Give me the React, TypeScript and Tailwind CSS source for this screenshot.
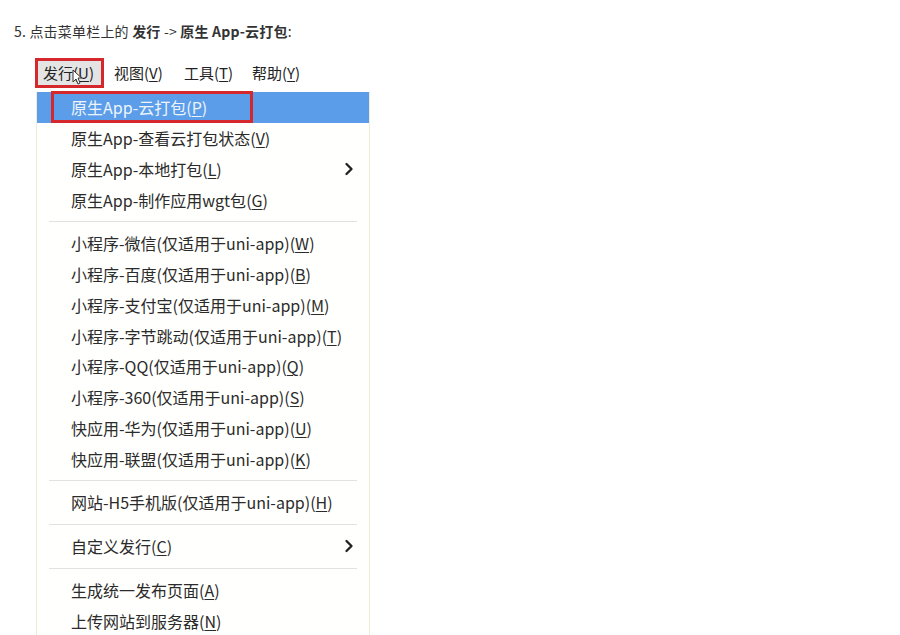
import { ChevronRight } from "lucide-react";

type Item = { label: string; key: string; sub?: boolean } | "sep";

const items: Item[] = [
  { label: "原生App-云打包", key: "P" },
  { label: "原生App-查看云打包状态", key: "V" },
  { label: "原生App-本地打包", key: "L", sub: true },
  { label: "原生App-制作应用wgt包", key: "G" },
  "sep",
  { label: "小程序-微信(仅适用于uni-app)", key: "W" },
  { label: "小程序-百度(仅适用于uni-app)", key: "B" },
  { label: "小程序-支付宝(仅适用于uni-app)", key: "M" },
  { label: "小程序-字节跳动(仅适用于uni-app)", key: "T" },
  { label: "小程序-QQ(仅适用于uni-app)", key: "Q" },
  { label: "小程序-360(仅适用于uni-app)", key: "S" },
  { label: "快应用-华为(仅适用于uni-app)", key: "U" },
  { label: "快应用-联盟(仅适用于uni-app)", key: "K" },
  "sep",
  { label: "网站-H5手机版(仅适用于uni-app)", key: "H" },
  "sep",
  { label: "自定义发行", key: "C", sub: true },
  "sep",
  { label: "生成统一发布页面", key: "A" },
  { label: "上传网站到服务器", key: "N" },
];

const Mnemonic = ({ k }: { k: string }) => (
  <>
    (<span className="underline underline-offset-2">{k}</span>)
  </>
);

const App = () => {
  return (
    <div
      className="h-[635px] w-[900px] overflow-hidden bg-white text-[#333]"
      style={{ fontFamily: '"Noto Sans CJK SC", "Noto Sans", sans-serif' }}
    >
      <p className="pl-[14px] pt-[20px] text-[14px] leading-[22px] tracking-[0.2px] text-[#333]">
        5. 点击菜单栏上的 <b>发行</b> -&gt; <b>原生 App-云打包</b>:
      </p>

      <div className="ml-[35px] mt-[16px] flex items-center text-[15px] text-[#222]">
        <div className="relative flex h-[30px] w-[69px] shrink-0 items-center border-[3px] border-[#d4282d] bg-[#e4e4e4] px-[5px]">
          发行<Mnemonic k="U" />
          <svg
            className="absolute left-[34px] top-[8px]"
            width="10"
            height="16"
            viewBox="0 0 10 16"
          >
            <path
              d="M1 1 L1 13 L4 10 L6 15 L8 14 L6 9 L9.5 9 Z"
              fill="#fff"
              stroke="#333"
              strokeWidth="1"
              strokeLinejoin="round"
            />
          </svg>
        </div>
        <div className="w-[80px] shrink-0 pl-[10px]">
          视图<Mnemonic k="V" />
        </div>
        <div className="w-[68px] shrink-0">
          工具<Mnemonic k="T" />
        </div>
        <div>
          帮助<Mnemonic k="Y" />
        </div>
      </div>

      <div className="ml-[36px] mt-[4px] w-[334px] border-x border-[#f1ecd8] bg-[#fffffd] text-[16px] text-[#2b2b2b]">
        {items.map((it, i) => {
          if (it === "sep")
            return (
              <div key={i} className="flex h-[13px] items-center px-[12px]">
                <div className="h-px w-full bg-[#e2e2e2]" />
              </div>
            );
          const active = i === 0;
          return (
            <div
              key={i}
              className={`relative flex h-[30.75px] items-center pl-[34px] pr-[10px] ${
                active ? "bg-[#5b9de8] text-[#eef4fc]" : ""
              }`}
            >
              <span className="flex-1 whitespace-nowrap">
                {it.label}
                <Mnemonic k={it.key} />
              </span>
              {it.sub && <ChevronRight size={20} strokeWidth={2.8} className="text-[#222]" />}
              {active && (
                <div className="absolute left-[14px] top-[-1px] h-[32px] w-[202px] border-[3px] border-[#d4282d]" />
              )}
            </div>
          );
        })}
      </div>
    </div>
  );
};

export default App;
